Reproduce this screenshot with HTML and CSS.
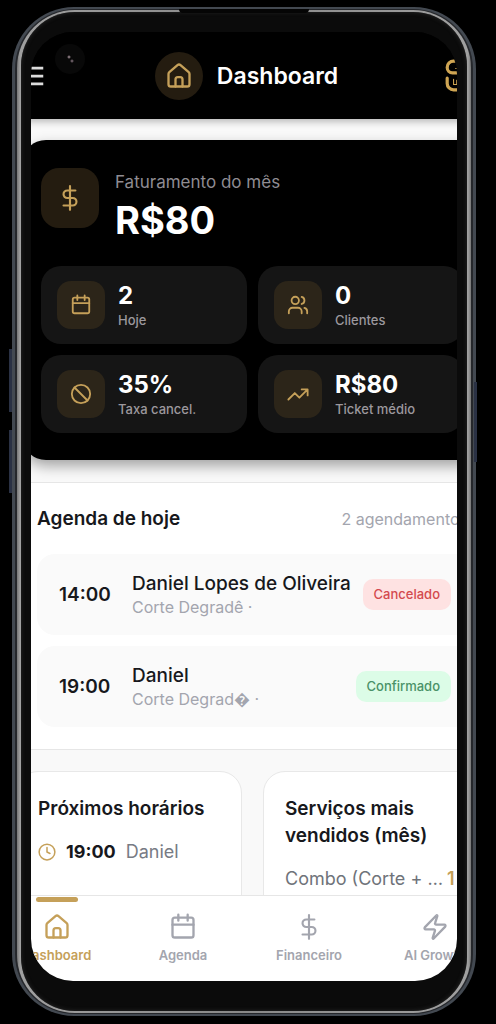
FILE: index.html
```html
<!DOCTYPE html>
<html lang="pt-BR">
<head>
<meta charset="utf-8">
<meta name="viewport" content="width=device-width, initial-scale=1">
<title>Dashboard</title>
<link rel="stylesheet" href="styles.css">
</head>
<body>
<svg class="sprite" aria-hidden="true">
  <symbol id="house" viewBox="0 0 24 24"><path d="M3 10.200a2 2 0 0 1 .7-1.500l7-6a2 2 0 0 1 2.600 0l7 6a2 2 0 0 1 .7 1.500V19a2 2 0 0 1-2 2H5a2 2 0 0 1-2-2z"/><path d="M9 21v-6a2 2 0 0 1 2-2h2a2 2 0 0 1 2 2v6"/></symbol>
  <symbol id="dollar" viewBox="-1 -1 26 26"><path d="M12 1v22M17 5H9.500a3.500 3.500 0 0 0 0 7h5a3.500 3.500 0 0 1 0 7H6"/></symbol>
  <symbol id="calendar" viewBox="0 0 24 24"><rect x="3" y="4" width="18" height="17" rx="2"/><path d="M8 1.500v5M16 1.500v5M3 10h18"/></symbol>
  <symbol id="users" viewBox="0 0 24 24"><circle cx="9" cy="7" r="4"/><path d="M2 21v-2a4 4 0 0 1 4-4h6a4 4 0 0 1 4 4v2M22 21v-2a4 4 0 0 0-3-3.870M16 3.130a4 4 0 0 1 0 7.750"/></symbol>
  <symbol id="ban" viewBox="0 0 24 24"><circle cx="12" cy="12" r="10"/><path d="m4.900 4.900 14.200 14.200"/></symbol>
  <symbol id="trend" viewBox="0 0 24 24"><path d="m1.500 18 7-7 5 5L22.500 7M16 7h6.500v6.500"/></symbol>
  <symbol id="clock" viewBox="0 0 24 24"><circle cx="12" cy="12" r="10.500"/><path d="M12 6v6l4 2"/></symbol>
  <symbol id="bolt" viewBox="0 0 24 24"><path d="M4 14a1 1 0 0 1-.780-1.630l9.900-10.200a.5.5 0 0 1 .860.460l-1.920 6.020A1 1 0 0 0 13 10h7a1 1 0 0 1 .780 1.630l-9.900 10.200a.5.5 0 0 1-.860-.460l1.920-6.020A1 1 0 0 0 11 14z"/></symbol>
  <symbol id="menu" viewBox="0 0 24 24"><path d="M3 3.500h18M3 12h18M3 20.500h18"/></symbol>
  <symbol id="brand" viewBox="0 0 32 32"><path d="M20 2H9a6 6 0 0 0-6 6a5 5 0 0 0 5 5h7M3 18v5a6 6 0 0 0 6 6h14"/><path d="M9 19v5h10M11 9h5M12 24v-4h6" class="thin"/></symbol>
</svg>

<div class="phone">
  <span class="key volume-up"></span>
  <span class="key volume-down"></span>
  <span class="key power"></span>
  <span class="speaker"></span>
  <div class="seam"><div class="metal"><div class="bezel">
    <div class="screen">
      <span class="camera"></span>
      <div class="app">
        <header class="topbar">
          <button class="icon-button" type="button" aria-label="Menu"><svg class="icon menu-icon"><use href="#menu"/></svg></button>
          <div class="page-title">
            <span class="title-icon"><svg class="icon icon-lg"><use href="#house"/></svg></span>
            <h1>Dashboard</h1>
          </div>
          <button class="icon-button brand-button" type="button" aria-label="Perfil"><svg class="icon brand-icon"><use href="#brand"/></svg></button>
        </header>

        <main class="content">
          <section class="revenue">
            <div class="revenue-head">
              <span class="revenue-icon"><svg class="icon icon-lg"><use href="#dollar"/></svg></span>
              <div>
                <p class="revenue-label">Faturamento do mês</p>
                <p class="revenue-value">R$80</p>
              </div>
            </div>
            <div class="stats">
              <div class="stat"><span class="stat-icon"><svg class="icon"><use href="#calendar"/></svg></span><div><p class="stat-value">2</p><p class="stat-label">Hoje</p></div></div>
              <div class="stat"><span class="stat-icon"><svg class="icon"><use href="#users"/></svg></span><div><p class="stat-value">0</p><p class="stat-label">Clientes</p></div></div>
              <div class="stat"><span class="stat-icon"><svg class="icon"><use href="#ban"/></svg></span><div><p class="stat-value">35%</p><p class="stat-label">Taxa cancel.</p></div></div>
              <div class="stat"><span class="stat-icon"><svg class="icon"><use href="#trend"/></svg></span><div><p class="stat-value">R$80</p><p class="stat-label">Ticket médio</p></div></div>
            </div>
          </section>

          <section class="agenda">
            <div class="agenda-head"><h2>Agenda de hoje</h2><span class="count">2 agendamentos</span></div>
            <ul class="bookings">
              <li class="booking"><time>14:00</time><div class="who"><p class="name">Daniel Lopes de Oliveira</p><p class="service">Corte Degradê ·</p></div><span class="badge cancelled">Cancelado</span></li>
              <li class="booking"><time>19:00</time><div class="who"><p class="name">Daniel</p><p class="service">Corte Degrad� ·</p></div><span class="badge confirmed">Confirmado</span></li>
            </ul>
          </section>

          <div class="panels">
            <section class="panel">
              <h2>Próximos horários</h2>
              <p class="next"><svg class="icon icon-sm"><use href="#clock"/></svg><time>19:00</time><span>Daniel</span></p>
            </section>
            <section class="panel">
              <h2>Serviços mais vendidos (mês)</h2>
              <p class="top-service"><span>Combo (Corte + …</span><b>1</b></p>
            </section>
          </div>
        </main>

        <nav class="tabs">
          <a class="tab active" href="#"><svg class="icon icon-lg"><use href="#house"/></svg>Dashboard</a>
          <a class="tab" href="#"><svg class="icon icon-lg"><use href="#calendar"/></svg>Agenda</a>
          <a class="tab" href="#"><svg class="icon icon-lg"><use href="#dollar"/></svg>Financeiro</a>
          <a class="tab" href="#"><svg class="icon icon-lg"><use href="#bolt"/></svg>AI Growth</a>
        </nav>
      </div>
    </div>
  </div></div></div>
</div>
</body>
</html>
```
FILE: styles.css
```css
:root {
  --gold: #c5a059;
  --ink: #17181c;
  --muted: #a3a5ae;
}

* { box-sizing: border-box; }

body {
  margin: 0;
  min-height: 100vh;
  padding: 7px 20px 8px 12px;
  background: #000;
  color: var(--ink);
  font-family: Inter, "Liberation Sans", sans-serif;
  font-size: 16px;
}

h1, h2, p, ul { margin: 0; padding: 0; }
.sprite { display: none; }

.icon {
  flex: none;
  width: 22px;
  height: 22px;
  fill: none;
  stroke: currentColor;
  stroke-width: 2;
  stroke-linecap: round;
  stroke-linejoin: round;
}
.icon-lg { width: 28px; height: 28px; }
.icon-sm { width: 18px; height: 18px; }

/* Device shell */
.phone {
  position: relative;
  height: calc(100vh - 15px);
  padding: 2px 3px;
  border-radius: 62px;
  background: #434951;
}
.seam { height: 100%; padding: 1px 2px; border-radius: 60px; background: #25272b; }
.metal {
  height: 100%;
  padding: 2px 4px;
  border-radius: 58px;
  background: linear-gradient(90deg, #777 0, #a0a0a0 3px, #888 50%, #a0a0a0 calc(100% - 3px), #777 100%);
}
.bezel {
  height: 100%;
  padding: 20px 10px 30px;
  border-radius: 54px;
  background: #0b0b0b;
  box-shadow: inset 0 0 4px #2b2b2b;
}
.screen {
  position: relative;
  height: 100%;
  overflow: hidden;
  border-radius: 42px;
  background: #000;
}
.camera {
  position: absolute;
  z-index: 3;
  top: 12px;
  left: 24px;
  width: 30px;
  height: 30px;
  border-radius: 50%;
  background:
    radial-gradient(circle at 14px 13px, #b9a3ac 0, transparent 2px),
    radial-gradient(circle at 17px 17px, #94808c 0, transparent 2px),
    #080808;
}
.speaker {
  position: absolute;
  z-index: 1;
  top: 2px;
  left: 36%;
  width: 28%;
  height: 4px;
  border-radius: 0 0 4px 4px;
  background: #050505;
}
.key { position: absolute; width: 3px; background: #2a3144; }
.volume-up { top: 342px; left: -3px; height: 63px; }
.volume-down { top: 423px; left: -3px; height: 63px; }
.power { top: 375px; right: -1px; height: 80px; }

/* App, wider than the visible glass on both sides */
.app {
  display: flex;
  flex-direction: column;
  height: 100%;
  margin: 0 -41px 0 -37px;
}

.topbar {
  position: relative;
  z-index: 1;
  display: flex;
  flex: none;
  align-items: center;
  justify-content: space-between;
  height: 87px;
  padding: 0 20px 0 30px;
  background: #000;
  box-shadow: 0 2px 8px rgba(0, 0, 0, .3);
}
.icon-button {
  display: flex;
  padding: 0;
  border: 0;
  background: none;
  color: #dcdcdc;
}
.menu-icon { width: 22px; height: 22px; stroke-linecap: butt; stroke-width: 3; }
.brand-button { color: #cfa553; }
.brand-icon { width: 34px; height: 34px; stroke-width: 3; }
.thin { stroke-width: 1; }
.page-title { display: flex; align-items: center; gap: 14px; padding-left: 3px; }
.title-icon {
  display: grid;
  place-items: center;
  width: 48px;
  height: 48px;
  border-radius: 50%;
  background: #241c10;
  color: var(--gold);
}
.page-title h1 { color: #fff; font-size: 23px; font-weight: 600; line-height: 32px; }

.content { flex: 1; min-height: 0; overflow: hidden; background: #f9f9f9; }

.revenue {
  margin: 21px 15px 22px 28px;
  padding: 28px 19px 27px;
  border-radius: 24px;
  background: #000;
  box-shadow: 0 6px 14px rgba(0, 0, 0, .35);
}
.revenue-head { display: flex; gap: 16px; margin-bottom: 20px; }
.revenue-icon {
  display: grid;
  place-items: center;
  width: 58px;
  height: 60px;
  border-radius: 18px;
  background: #241c10;
  color: var(--gold);
}
.revenue-label { padding-top: 2px; color: #8f8c92; font-size: 17px; line-height: 24px; }
.revenue-value { color: #fff; font-size: 38px; font-weight: 700; line-height: 52px; }

.stats { display: grid; grid-template-columns: 1fr 1fr; gap: 11px; }
.stat {
  display: flex;
  align-items: center;
  gap: 13px;
  height: 78px;
  padding: 0 16px;
  border-radius: 20px;
  background: #151515;
}
.stat-icon {
  display: grid;
  place-items: center;
  width: 48px;
  height: 48px;
  border-radius: 14px;
  background: #2c2519;
  color: var(--gold);
}
.stat-value { color: #fff; font-size: 24px; font-weight: 700; line-height: 29px; }
.stat-label { color: #9c989d; font-size: 13px; font-weight: 500; line-height: 20px; }

.agenda {
  padding: 22px 25px 22px 43px;
  border-top: 1px solid #e6e6e6;
  border-bottom: 1px solid #e6e6e6;
  background: #fff;
}
.agenda-head { display: flex; align-items: center; justify-content: space-between; margin-bottom: 22px; padding-right: 5px; }
h2 { font-size: 19px; font-weight: 600; line-height: 27px; }
.count { color: var(--muted); font-size: 16px; }
.bookings { display: grid; gap: 11px; list-style: none; }
.booking {
  display: flex;
  align-items: center;
  height: 81px;
  padding: 0 22px;
  border-radius: 18px;
  background: #fafafa;
}
.booking time { width: 73px; font-size: 19px; font-weight: 600; }
.who { flex: 1; min-width: 0; }
.name { font-size: 19px; font-weight: 500; line-height: 25px; white-space: nowrap; }
.service { color: var(--muted); font-size: 16px; line-height: 23px; white-space: nowrap; }
.badge { padding: 5px 11px; border-radius: 10px; font-size: 13px; font-weight: 500; line-height: 21px; }
.cancelled { background: #fee2e2; color: #d44a4e; }
.confirmed { background: #dcfce7; color: #4a9268; }

.panels { display: grid; grid-template-columns: 1fr 1fr; gap: 21px; padding: 21px 9px 21px 22px; }
.panel {
  min-height: 170px;
  padding: 23px 21px;
  border: 1px solid #e8e8e8;
  border-radius: 22px;
  background: #fff;
}
.next { display: flex; align-items: center; gap: 10px; margin-top: 16px; color: #777b84; font-size: 18px; line-height: 27px; }
.next .icon { color: var(--gold); }
.next time { color: var(--ink); font-weight: 700; }
.top-service { display: flex; gap: 4px; margin-top: 16px; color: #6f737a; font-size: 18px; line-height: 27px; white-space: nowrap; }
.top-service b { color: var(--gold); font-weight: 600; }

.tabs {
  display: grid;
  flex: none;
  grid-template-columns: repeat(4, 1fr);
  height: 86px;
  border-top: 1px solid #e6e6e6;
  background: #fff;
}
.tab {
  position: relative;
  display: flex;
  flex-direction: column;
  align-items: center;
  gap: 4px;
  padding-top: 17px;
  color: var(--muted);
  font-size: 13px;
  font-weight: 600;
  line-height: 20px;
  text-decoration: none;
}
.active { color: var(--gold); }
.active::before {
  content: "";
  position: absolute;
  top: 1px;
  width: 42px;
  height: 5px;
  border-radius: 3px;
  background: var(--gold);
}
```
